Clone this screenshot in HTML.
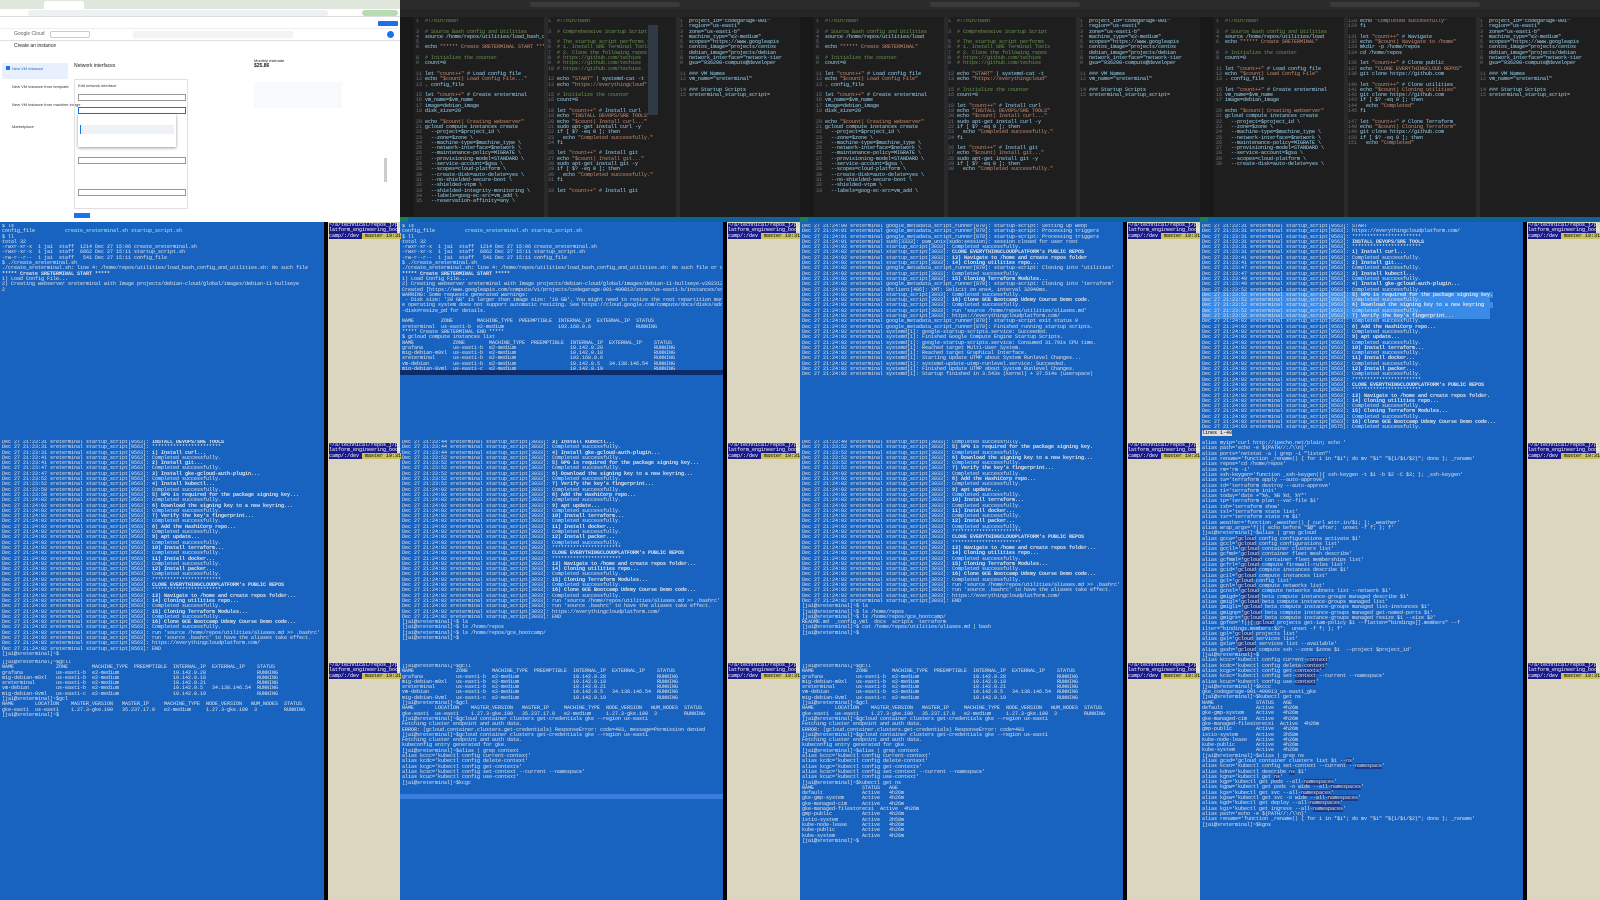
<!DOCTYPE html>
<html><head><meta charset="utf-8"><style>
*{margin:0;padding:0;box-sizing:border-box}
body{width:1600px;height:900px;overflow:hidden;background:#000;font-family:"Liberation Sans",sans-serif;position:relative}
.a{position:absolute}
pre{font-family:"Liberation Mono",monospace;font-size:5px;line-height:5.3px;color:#e6e6e6;white-space:pre;overflow:hidden}
.term{background:#1862c0}
.side{background:#dcd6c0}
.hd{background:#1a1a8a;color:#fff;font-family:"Liberation Mono",monospace;font-size:5px;line-height:5.3px;white-space:pre;width:68px}
.hd b{background:#c8c060;color:#000;font-weight:normal}
.vs{background:#1e1e1e}
.ed pre{color:#9cdcfe}
.ln{color:#6e7681}
.c{color:#6a9955}.s{color:#ce9178}.k{color:#c586c0}
.tab{background:#252526;height:8px}
.sb{background:#0e639c;height:5px}
</style></head><body>

<!-- COLUMN 1 BROWSER -->
<div class="a" style="left:0;top:0;width:400px;height:222px;background:#fff">
 <div class="a" style="left:0;top:0;width:400px;height:9px;background:#dfe6dc"></div>
 <div class="a" style="left:44px;top:1px;width:40px;height:8px;background:#fff;border-radius:3px 3px 0 0"></div>
 <div class="a" style="left:0;top:9px;width:400px;height:8px;background:#fff;border-bottom:1px solid #ddd"></div>
 <div class="a" style="left:28px;top:10px;width:300px;height:6px;background:#eef1f4;border-radius:3px"></div>
 <div class="a" style="left:362px;top:10px;width:36px;height:6px;background:#b7dcb2;border-radius:3px"></div>
 <div class="a" style="left:0;top:18px;width:400px;height:11px;background:#fff;border-bottom:1px solid #eee"></div>
 <div class="a" style="left:378px;top:21px;width:20px;height:5px;background:#1a73e8;border-radius:1px"></div>
 <div class="a" style="left:0;top:29px;width:400px;height:12px;background:#fff;border-bottom:1px solid #e0e0e0"></div>
 <div class="a" style="left:14px;top:31px;font-size:5px;color:#5f6368">Google Cloud</div>
 <div class="a" style="left:50px;top:31px;width:40px;height:7px;border:1px solid #ccc;border-radius:2px"></div>
 <div class="a" style="left:133px;top:31px;width:160px;height:7px;background:#f1f3f4;border-radius:2px"></div>
 <div class="a" style="left:387px;top:31px;width:7px;height:7px;background:#1a73e8;border-radius:50%"></div>
 <div class="a" style="left:14px;top:43px;font-size:5px;color:#202124">Create an instance</div>
 <div class="a" style="left:2px;top:63px;width:66px;height:16px;background:#e8f0fe"></div>
 <div class="a" style="left:6px;top:66px;width:4px;height:4px;background:#1a73e8"></div>
 <div class="a" style="left:12px;top:66px;font-size:4px;color:#1967d2">New VM instance</div>
 <div class="a" style="left:12px;top:84px;font-size:4px;color:#333">New VM instance from template</div>
 <div class="a" style="left:12px;top:102px;font-size:4px;color:#333">New VM instance from machine image</div>
 <div class="a" style="left:12px;top:124px;font-size:4px;color:#333">Marketplace</div>
 <div class="a" style="left:74px;top:63px;font-size:5px;color:#202124">Network interfaces</div>
 <div class="a" style="left:74px;top:79px;width:114px;height:130px;border:1px solid #e0e0e0"></div>
 <div class="a" style="left:78px;top:83px;font-size:4px;color:#333">Edit network interface</div>
 <div class="a" style="left:78px;top:94px;width:108px;height:7px;border:1px solid #999"></div>
 <div class="a" style="left:78px;top:107px;width:108px;height:7px;border:1px solid #1a73e8"></div>
 <div class="a" style="left:78px;top:114px;width:98px;height:33px;background:#fff;box-shadow:0 1px 3px rgba(0,0,0,.4)"></div>
 <div class="a" style="left:80px;top:125px;width:94px;height:9px;background:#eef2f8;border-left:1px solid #1a73e8"></div>
 <div class="a" style="left:78px;top:157px;width:108px;height:7px;border:1px solid #999"></div>
 <div class="a" style="left:78px;top:189px;width:108px;height:7px;border:1px solid #999"></div>
 <div class="a" style="left:74px;top:213px;width:16px;height:5px;background:#1a73e8"></div>
 <div class="a" style="left:254px;top:58px;font-size:4px;color:#202124">Monthly estimate<br><b style="font-size:5px">$25.86</b></div>
 <div class="a" style="left:254px;top:82px;width:88px;height:26px;background:#f8f9fa"></div>
 <div class="a" style="left:384px;top:158px;width:3px;height:24px;background:#ccc"></div>
</div>

<!-- COLUMNS 2-4 VS CODE -->
<div class="a vs" style="left:400px;top:0;width:1200px;height:222px"></div>
<div class="a" style="left:400px;top:0;width:1200px;height:9px;background:#2b2b2b"></div>
<div class="a" style="left:530px;top:2px;width:150px;height:5px;background:#3a3a3a;border-radius:2px"></div>
<div class="a" style="left:930px;top:2px;width:150px;height:5px;background:#3a3a3a;border-radius:2px"></div>
<div class="a" style="left:1330px;top:2px;width:150px;height:5px;background:#3a3a3a;border-radius:2px"></div>
<div class="a" style="left:400px;top:9px;width:14px;height:208px;background:#181818"></div>
<div class="a" style="left:800px;top:9px;width:14px;height:208px;background:#181818"></div>
<div class="a" style="left:1200px;top:9px;width:14px;height:208px;background:#181818"></div>
<div class="a" style="left:400px;top:9px;width:1200px;height:8px;background:#252526"></div>
<div class="a sb" style="left:400px;top:217px;width:1200px"></div>
<div class="a" style="left:400px;top:217px;width:8px;height:5px;background:#16825d"></div>
<div class="a" style="left:800px;top:217px;width:8px;height:5px;background:#16825d"></div>
<div class="a" style="left:1200px;top:217px;width:8px;height:5px;background:#16825d"></div>

<div class="a ed" style="left:416px;top:19px;width:128px;height:196px"><pre><span class="ln">1 </span> <span class="c">#!/bin/bash</span>

<span class="ln">3 </span> <span class="c"># Source Bash config and Utilities</span>
<span class="ln">4 </span> source /home/repos/utilities/load_bash_config
<span class="ln">5 </span>
<span class="ln">6 </span> echo <span class="s">"***** Create SRETERMINAL START *****"</span>

<span class="ln">8 </span> <span class="c"># Initialize the counter</span>
<span class="ln">9 </span> count=0

<span class="ln">11</span> let <span class="s">"count++"</span> # Load config file
<span class="ln">12</span> echo <span class="s">"$count) Load Config File..."</span>
<span class="ln">13</span> . config_file

<span class="ln">15</span> let <span class="s">"count++"</span> # Create sreterminal
<span class="ln">16</span> vm_name=$vm_name
<span class="ln">17</span> image=debian_image
<span class="ln">18</span> disk_size=20

<span class="ln">20</span> echo <span class="s">"$count) Creating webserver"</span>
<span class="ln">21</span> gcloud compute instances create
<span class="ln">22</span>   --project=$project_id \
<span class="ln">23</span>   --zone=$zone \
<span class="ln">24</span>   --machine-type=$machine_type \
<span class="ln">25</span>   --network-interface=$network \
<span class="ln">26</span>   --maintenance-policy=MIGRATE \
<span class="ln">27</span>   --provisioning-model=STANDARD \
<span class="ln">28</span>   --service-account=$gsa \
<span class="ln">29</span>   --scopes=cloud-platform \
<span class="ln">30</span>   --create-disk=auto-delete=yes \
<span class="ln">31</span>   --no-shielded-secure-boot \
<span class="ln">32</span>   --shielded-vtpm \
<span class="ln">33</span>   --shielded-integrity-monitoring \
<span class="ln">34</span>   --labels=goog-ec-src=vm_add \
<span class="ln">35</span>   --reservation-affinity=any \</pre></div>
<div class="a ed" style="left:548px;top:19px;width:128px;height:196px"><pre><span class="ln">1 </span> <span class="c">#!/bin/bash</span>

<span class="ln">3 </span> <span class="c"># Comprehensive Startup Script</span>

<span class="ln">5 </span> <span class="c"># The startup script performs the</span>
<span class="ln">6 </span> <span class="c"># 1. Install SRE Terminal Tools</span>
<span class="ln">7 </span> <span class="c"># 2. Clone the following repos</span>
<span class="ln">8 </span> <span class="c"># https://github.com/techies</span>
<span class="ln">9 </span> <span class="c"># https://github.com/techies</span>
<span class="ln">10</span> <span class="c"># https://github.com/techies</span>

<span class="ln">12</span> echo <span class="s">"START"</span> | systemd-cat -t
<span class="ln">13</span> echo <span class="s">"https://everythingcloud"</span>

<span class="ln">15</span> <span class="c"># Initialize the counter</span>
<span class="ln">16</span> count=0

<span class="ln">18</span> let <span class="s">"count++"</span> # Install curl
<span class="ln">19</span> echo <span class="s">"INSTALL DEVOPS/SRE TOOLS"</span>
<span class="ln">20</span> echo <span class="s">"$count) Install curl..."</span>
<span class="ln">21</span> sudo apt-get install curl -y
<span class="ln">22</span> if [ $? -eq 0 ]; then
<span class="ln">23</span>   echo <span class="s">"Completed successfully."</span>
<span class="ln">24</span> fi

<span class="ln">26</span> let <span class="s">"count++"</span> # Install git
<span class="ln">27</span> echo <span class="s">"$count) Install git..."</span>
<span class="ln">28</span> sudo apt-get install git -y
<span class="ln">29</span> if [ $? -eq 0 ]; then
<span class="ln">30</span>   echo <span class="s">"Completed successfully."</span>
<span class="ln">31</span> fi

<span class="ln">33</span> let <span class="s">"count++"</span> # Install git</pre></div>
<div class="a ed" style="left:680px;top:19px;width:115px;height:196px"><pre><span class="ln">1 </span> project_id="codegarage-001"
<span class="ln">2 </span> region="us-east1"
<span class="ln">3 </span> zone="us-east1-b"
<span class="ln">4 </span> machine_type="e2-medium"
<span class="ln">5 </span> scopes="https://www.googleapis
<span class="ln">6 </span> centos_image="projects/centos
<span class="ln">7 </span> debian_image="projects/debian
<span class="ln">8 </span> network_interface="network-tier
<span class="ln">9 </span> gsa="936200-compute@developer

<span class="ln">11</span> ### VM Names
<span class="ln">12</span> vm_name="sreterminal"

<span class="ln">14</span> ### Startup Scripts
<span class="ln">15</span> sreterminal_startup_script=</pre></div>
<div class="a" style="left:544px;top:17px;width:4px;height:200px;background:#2a2a2a"></div>
<div class="a" style="left:676px;top:17px;width:4px;height:200px;background:#2a2a2a"></div>
<div class="a" style="left:648px;top:25px;width:10px;height:90px;background:#2f3a44"></div>

<div class="a ed" style="left:816px;top:19px;width:128px;height:196px"><pre><span class="ln">1 </span> <span class="c">#!/bin/bash</span>

<span class="ln">3 </span> <span class="c"># Source Bash config and Utilities</span>
<span class="ln">4 </span> source /home/repos/utilities/load
<span class="ln">5 </span>
<span class="ln">6 </span> echo <span class="s">"***** Create SRETERMINAL"</span>

<span class="ln">8 </span> <span class="c"># Initialize the counter</span>
<span class="ln">9 </span> count=0

<span class="ln">11</span> let <span class="s">"count++"</span> # Load config file
<span class="ln">12</span> echo <span class="s">"$count) Load Config File"</span>
<span class="ln">13</span> . config_file

<span class="ln">15</span> let <span class="s">"count++"</span> # Create sreterminal
<span class="ln">16</span> vm_name=$vm_name
<span class="ln">17</span> image=debian_image
<span class="ln">18</span> disk_size=20

<span class="ln">20</span> echo <span class="s">"$count) Creating webserver"</span>
<span class="ln">21</span> gcloud compute instances create
<span class="ln">22</span>   --project=$project_id \
<span class="ln">23</span>   --zone=$zone \
<span class="ln">24</span>   --machine-type=$machine_type \
<span class="ln">25</span>   --network-interface=$network \
<span class="ln">26</span>   --maintenance-policy=MIGRATE \
<span class="ln">27</span>   --provisioning-model=STANDARD \
<span class="ln">28</span>   --service-account=$gsa \
<span class="ln">29</span>   --scopes=cloud-platform \
<span class="ln">30</span>   --create-disk=auto-delete=yes \
<span class="ln">31</span>   --no-shielded-secure-boot \
<span class="ln">32</span>   --shielded-vtpm \
<span class="ln">33</span>   --labels=goog-ec-src=vm_add \</pre></div>
<div class="a ed" style="left:948px;top:19px;width:128px;height:196px"><pre><span class="ln">1 </span> <span class="c">#!/bin/bash</span>

<span class="ln">3 </span> <span class="c"># Comprehensive Startup Script</span>

<span class="ln">5 </span> <span class="c"># The startup script performs</span>
<span class="ln">6 </span> <span class="c"># 1. Install SRE Terminal Tools</span>
<span class="ln">7 </span> <span class="c"># 2. Clone the following repos</span>
<span class="ln">8 </span> <span class="c"># https://github.com/techies</span>
<span class="ln">9 </span> <span class="c"># https://github.com/techies</span>

<span class="ln">12</span> echo <span class="s">"START"</span> | systemd-cat -t
<span class="ln">13</span> echo <span class="s">"https://everythingcloud"</span>

<span class="ln">15</span> <span class="c"># Initialize the counter</span>
<span class="ln">16</span> count=0

<span class="ln">18</span> let <span class="s">"count++"</span> # Install curl
<span class="ln">19</span> echo <span class="s">"INSTALL DEVOPS/SRE TOOLS"</span>
<span class="ln">20</span> echo <span class="s">"$count) Install curl..."</span>
<span class="ln">21</span> sudo apt-get install curl -y
<span class="ln">22</span> if [ $? -eq 0 ]; then
<span class="ln">23</span>   echo <span class="s">"Completed successfully."</span>
<span class="ln">24</span> fi

<span class="ln">26</span> let <span class="s">"count++"</span> # Install git
<span class="ln">27</span> echo <span class="s">"$count) Install git..."</span>
<span class="ln">28</span> sudo apt-get install git -y
<span class="ln">29</span> if [ $? -eq 0 ]; then
<span class="ln">30</span>   echo <span class="s">"Completed successfully."</span></pre></div>
<div class="a ed" style="left:1080px;top:19px;width:115px;height:196px"><pre><span class="ln">1 </span> project_id="codegarage-001"
<span class="ln">2 </span> region="us-east1"
<span class="ln">3 </span> zone="us-east1-b"
<span class="ln">4 </span> machine_type="e2-medium"
<span class="ln">5 </span> scopes="https://www.googleapis
<span class="ln">6 </span> centos_image="projects/centos
<span class="ln">7 </span> debian_image="projects/debian
<span class="ln">8 </span> network_interface="network-tier
<span class="ln">9 </span> gsa="936200-compute@developer

<span class="ln">11</span> ### VM Names
<span class="ln">12</span> vm_name="sreterminal"

<span class="ln">14</span> ### Startup Scripts
<span class="ln">15</span> sreterminal_startup_script=</pre></div>
<div class="a" style="left:944px;top:17px;width:4px;height:200px;background:#2a2a2a"></div>
<div class="a" style="left:1076px;top:17px;width:4px;height:200px;background:#2a2a2a"></div>

<div class="a ed" style="left:1216px;top:19px;width:128px;height:196px"><pre><span class="ln">1 </span> <span class="c">#!/bin/bash</span>

<span class="ln">3 </span> <span class="c"># Source Bash config and Utilities</span>
<span class="ln">4 </span> source /home/repos/utilities/load
<span class="ln">6 </span> echo <span class="s">"***** Create SRETERMINAL"</span>

<span class="ln">8 </span> <span class="c"># Initialize the counter</span>
<span class="ln">9 </span> count=0

<span class="ln">11</span> let <span class="s">"count++"</span> # Load config file
<span class="ln">12</span> echo <span class="s">"$count) Load Config File"</span>
<span class="ln">13</span> . config_file

<span class="ln">15</span> let <span class="s">"count++"</span> # Create sreterminal
<span class="ln">16</span> vm_name=$vm_name
<span class="ln">17</span> image=debian_image

<span class="ln">20</span> echo <span class="s">"$count) Creating webserver"</span>
<span class="ln">21</span> gcloud compute instances create
<span class="ln">22</span>   --project=$project_id \
<span class="ln">23</span>   --zone=$zone \
<span class="ln">24</span>   --machine-type=$machine_type \
<span class="ln">25</span>   --network-interface=$network \
<span class="ln">26</span>   --maintenance-policy=MIGRATE \
<span class="ln">27</span>   --provisioning-model=STANDARD \
<span class="ln">28</span>   --service-account=$gsa \
<span class="ln">29</span>   --scopes=cloud-platform \
<span class="ln">30</span>   --create-disk=auto-delete=yes \</pre></div>
<div class="a ed" style="left:1348px;top:19px;width:128px;height:196px"><pre><span class="ln">128</span> echo <span class="s">"Completed successfully"</span>
<span class="ln">129</span> fi

<span class="ln">131</span> let <span class="s">"count++"</span> # Navigate
<span class="ln">132</span> echo <span class="s">"$count) Navigate to /home"</span>
<span class="ln">133</span> mkdir -p /home/repos
<span class="ln">134</span> cd /home/repos

<span class="ln">136</span> let <span class="s">"count++"</span> # Clone public
<span class="ln">137</span> echo <span class="s">"CLONE EVERYTHINGCLOUD REPOS"</span>
<span class="ln">138</span> git clone https://github.com

<span class="ln">140</span> let <span class="s">"count++"</span> # Clone utilities
<span class="ln">141</span> echo <span class="s">"$count) Cloning utilities"</span>
<span class="ln">142</span> git clone https://github.com
<span class="ln">143</span> if [ $? -eq 0 ]; then
<span class="ln">144</span>   echo <span class="s">"Completed"</span>
<span class="ln">145</span> fi

<span class="ln">147</span> let <span class="s">"count++"</span> # Clone Terraform
<span class="ln">148</span> echo <span class="s">"$count) Cloning Terraform"</span>
<span class="ln">149</span> git clone https://github.com
<span class="ln">150</span> if [ $? -eq 0 ]; then
<span class="ln">151</span>   echo <span class="s">"Completed"</span></pre></div>
<div class="a ed" style="left:1480px;top:19px;width:115px;height:196px"><pre><span class="ln">1 </span> project_id="codegarage-001"
<span class="ln">2 </span> region="us-east1"
<span class="ln">3 </span> zone="us-east1-b"
<span class="ln">4 </span> machine_type="e2-medium"
<span class="ln">5 </span> scopes="https://www.googleapis
<span class="ln">6 </span> centos_image="projects/centos
<span class="ln">7 </span> debian_image="projects/debian
<span class="ln">8 </span> network_interface="network-tier
<span class="ln">9 </span> gsa="936200-compute@developer

<span class="ln">11</span> ### VM Names
<span class="ln">12</span> vm_name="sreterminal"

<span class="ln">14</span> ### Startup Scripts
<span class="ln">15</span> sreterminal_startup_script=</pre></div>
<div class="a" style="left:1344px;top:17px;width:4px;height:200px;background:#2a2a2a"></div>
<div class="a" style="left:1476px;top:17px;width:4px;height:200px;background:#2a2a2a"></div>

<!-- TERMINALS -->
<div class="a term" style="left:0;top:222px;width:324px;height:678px"></div>
<div class="a side" style="left:328px;top:222px;width:72px;height:678px"></div>
<div class="a term" style="left:400px;top:222px;width:323px;height:678px"></div>
<div class="a side" style="left:727px;top:222px;width:73px;height:678px"></div>
<div class="a term" style="left:800px;top:222px;width:323px;height:678px"></div>
<div class="a side" style="left:1127px;top:222px;width:73px;height:678px"></div>
<div class="a term" style="left:1200px;top:222px;width:323px;height:678px"></div>
<div class="a side" style="left:1527px;top:222px;width:73px;height:678px"></div>

<div class="a hd" style="left:329px;top:223px">~/a/technical/repos_j/p
latform_engineering_boot
camp/:/dev <b> master 19:31</b></div>
<div class="a hd" style="left:329px;top:443px">~/a/technical/repos_j/p
latform_engineering_boot
camp/:/dev <b> master 19:31</b></div>
<div class="a hd" style="left:329px;top:663px">~/a/technical/repos_j/p
latform_engineering_boot
camp/:/dev <b> master 19:31</b></div>
<div class="a hd" style="left:728px;top:223px">~/a/technical/repos_j/p
latform_engineering_boot
camp/:/dev <b> master 19:31</b></div>
<div class="a hd" style="left:728px;top:443px">~/a/technical/repos_j/p
latform_engineering_boot
camp/:/dev <b> master 19:31</b></div>
<div class="a hd" style="left:728px;top:663px">~/a/technical/repos_j/p
latform_engineering_boot
camp/:/dev <b> master 19:31</b></div>
<div class="a hd" style="left:1128px;top:223px">~/a/technical/repos_j/p
latform_engineering_boot
camp/:/dev <b> master 19:31</b></div>
<div class="a hd" style="left:1128px;top:443px">~/a/technical/repos_j/p
latform_engineering_boot
camp/:/dev <b> master 19:31</b></div>
<div class="a hd" style="left:1128px;top:663px">~/a/technical/repos_j/p
latform_engineering_boot
camp/:/dev <b> master 19:31</b></div>
<div class="a hd" style="left:1528px;top:223px">~/a/technical/repos_j/p
latform_engineering_boot
camp/:/dev <b> master 19:31</b></div>
<div class="a hd" style="left:1528px;top:443px">~/a/technical/repos_j/p
latform_engineering_boot
camp/:/dev <b> master 19:31</b></div>
<div class="a hd" style="left:1528px;top:663px">~/a/technical/repos_j/p
latform_engineering_boot
camp/:/dev <b> master 19:31</b></div>

<!-- col1 terminal text -->
<pre class="a" style="left:2px;top:224px;width:320px">$ ls
config_file          <span style="color:#8fe">create_sreterminal.sh startup_script.sh</span>
$ ll
total 32
-rwxr-xr-x  1 jai  staff  1214 Dec 27 15:06 create_sreterminal.sh
-rwxr-xr-x  1 jai  staff  6862 Dec 27 15:11 startup_script.sh
-rw-r--r--  1 jai  staff   541 Dec 27 15:11 config_file
$ ./create_sreterminal.sh
./create_sreterminal.sh: line 4: /home/repos/utilities/load_bash_config_and_utilities.sh: No such file
<b>***** Create SRETERMINAL START *****</b>
1) Load Config File...
2) Creating webserver sreterminal with Image projects/debian-cloud/global/images/debian-11-bullseye
2</pre>
<pre class="a" style="left:2px;top:440px;width:320px">Dec 27 21:23:31 sreterminal startup_script[9563]: <b>INSTALL DEVOPS/SRE TOOLS</b>
Dec 27 21:23:31 sreterminal startup_script[9563]: ***********************
Dec 27 21:23:31 sreterminal startup_script[9563]: <b>1) Install curl...</b>
Dec 27 21:23:41 sreterminal startup_script[9563]: Completed successfully.
Dec 27 21:23:41 sreterminal startup_script[9563]: <b>2) Install git...</b>
Dec 27 21:23:47 sreterminal startup_script[9563]: Completed successfully.
Dec 27 21:23:47 sreterminal startup_script[9563]: <b>3) Install gke-gcloud-auth-plugin...</b>
Dec 27 21:23:52 sreterminal startup_script[9563]: Completed successfully.
Dec 27 21:23:52 sreterminal startup_script[9563]: <b>4) Install kubectl...</b>
Dec 27 21:23:58 sreterminal startup_script[9563]: Completed successfully.
Dec 27 21:23:58 sreterminal startup_script[9563]: <b>5) GPG is required for the package signing key...</b>
Dec 27 21:24:02 sreterminal startup_script[9563]: Completed successfully.
Dec 27 21:24:02 sreterminal startup_script[9563]: <b>6) Download the signing key to a new keyring...</b>
Dec 27 21:24:02 sreterminal startup_script[9563]: Completed successfully.
Dec 27 21:24:02 sreterminal startup_script[9563]: <b>7) Verify the key's fingerprint...</b>
Dec 27 21:24:02 sreterminal startup_script[9563]: Completed successfully.
Dec 27 21:24:02 sreterminal startup_script[9563]: <b>8) Add the HashiCorp repo...</b>
Dec 27 21:24:02 sreterminal startup_script[9563]: Completed successfully.
Dec 27 21:24:02 sreterminal startup_script[9563]: <b>9) apt update...</b>
Dec 27 21:24:02 sreterminal startup_script[9563]: Completed successfully.
Dec 27 21:24:02 sreterminal startup_script[9563]: <b>10) Install terraform...</b>
Dec 27 21:24:02 sreterminal startup_script[9563]: Completed successfully.
Dec 27 21:24:02 sreterminal startup_script[9563]: <b>11) Install docker...</b>
Dec 27 21:24:02 sreterminal startup_script[9563]: Completed successfully.
Dec 27 21:24:02 sreterminal startup_script[9563]: <b>12) Install packer...</b>
Dec 27 21:24:02 sreterminal startup_script[9563]: Completed successfully.
Dec 27 21:24:02 sreterminal startup_script[9563]: ***********************
Dec 27 21:24:02 sreterminal startup_script[9563]: <b>CLONE EVERYTHINGCLOUDPLATFORM's PUBLIC REPOS</b>
Dec 27 21:24:02 sreterminal startup_script[9563]: ***********************
Dec 27 21:24:02 sreterminal startup_script[9563]: <b>13) Navigate to /home and create repos folder...</b>
Dec 27 21:24:02 sreterminal startup_script[9563]: <b>14) Cloning utilities repo...</b>
Dec 27 21:24:02 sreterminal startup_script[9563]: Completed successfully.
Dec 27 21:24:02 sreterminal startup_script[9563]: <b>15) Cloning Terraform Modules...</b>
Dec 27 21:24:02 sreterminal startup_script[9563]: Completed successfully.
Dec 27 21:24:02 sreterminal startup_script[9563]: <b>16) Clone GCE Bootcamp Udemy Course Demo code...</b>
Dec 27 21:24:02 sreterminal startup_script[9563]: Completed successfully.
Dec 27 21:24:02 sreterminal startup_script[9563]: run 'source /home/repos/utilities/aliases.md >> .bashrc' to add
Dec 27 21:24:02 sreterminal startup_script[9563]: run 'source .bashrc' to have the aliases take effect.
Dec 27 21:24:02 sreterminal startup_script[9563]: https://everythingcloudplatform.com/
Dec 27 21:24:02 sreterminal startup_script[9563]: END
[jai@sreterminal]~$ </pre>
<pre class="a" style="left:2px;top:660px;width:320px">[jai@sreterminal]~$gcll
NAME              ZONE        MACHINE_TYPE  PREEMPTIBLE  INTERNAL_IP  EXTERNAL_IP    STATUS
grafana           us-east1-b  e2-medium                  10.142.0.28                 RUNNING
mig-debian-m9xl   us-east1-b  e2-medium                  10.142.0.18                 RUNNING
sreterminal       us-east1-b  e2-medium                  10.142.0.21                 RUNNING
vm-debian         us-east1-b  e2-medium                  10.142.0.5   34.138.146.54  RUNNING
mig-debian-8vml   us-east1-c  e2-medium                  10.142.0.19                 RUNNING
[jai@sreterminal]~$gcl
NAME       LOCATION    MASTER_VERSION   MASTER_IP     MACHINE_TYPE  NODE_VERSION   NUM_NODES  STATUS
gke-east1  us-east1    1.27.3-gke.100   35.237.17.0   e2-medium     1.27.3-gke.100  3         RUNNING
[jai@sreterminal]~$ </pre>

<!-- col2 terminal text -->
<pre class="a" style="left:402px;top:224px;width:320px">$ ls
config_file          <span style="color:#8fe">create_sreterminal.sh startup_script.sh</span>
$ ll
total 32
-rwxr-xr-x  1 jai  staff  1214 Dec 27 15:06 create_sreterminal.sh
-rwxr-xr-x  1 jai  staff  6862 Dec 27 15:11 startup_script.sh
-rw-r--r--  1 jai  staff   541 Dec 27 15:11 config_file
$ ./create_sreterminal.sh
./create_sreterminal.sh: line 4: /home/repos/utilities/load_bash_config_and_utilities.sh: No such file or directory
<b>***** Create SRETERMINAL START *****</b>
1) Load Config File...
2) Creating webserver sreterminal with Image projects/debian-cloud/global/images/debian-11-bullseye-v20231212...
Created [https://www.googleapis.com/compute/v1/projects/codegarage-001-400013/zones/us-east1-b/instances/sreterminal].
WARNING: Some requests generated warnings:
 - Disk size: '20 GB' is larger than image size: '10 GB'. You might need to resize the root repartition manually if th
e operating system does not support automatic resizing. See https://cloud.google.com/compute/docs/disks/add-persistent
-disk#resize_pd for details.

NAME         ZONE        MACHINE_TYPE  PREEMPTIBLE  INTERNAL_IP  EXTERNAL_IP  STATUS
sreterminal  us-east1-b  e2-medium                  192.168.0.6               RUNNING
***** Create SRETERMINAL END *****
$ gcloud compute instances list
NAME             ZONE        MACHINE_TYPE  PREEMPTIBLE  INTERNAL_IP  EXTERNAL_IP    STATUS
grafana          us-east1-b  e2-medium                  10.142.0.28                 RUNNING
mig-debian-m9xl  us-east1-b  e2-medium                  10.142.0.18                 RUNNING
sreterminal      us-east1-b  e2-medium                  192.168.0.6                 RUNNING
vm-debian        us-east1-b  e2-medium                  10.142.0.5   34.138.146.54  RUNNING
mig-debian-8vml  us-east1-c  e2-medium                  10.142.0.19                 RUNNING</pre>
<div class="a" style="left:400px;top:370px;width:323px;height:5px;background:#0d2c6e"></div>
<pre class="a" style="left:402px;top:440px;width:320px">Dec 27 21:23:44 sreterminal startup_script[3033]: <b>3) Install kubectl...</b>
Dec 27 21:23:44 sreterminal startup_script[3033]: Completed successfully.
Dec 27 21:23:44 sreterminal startup_script[3033]: <b>4) Install gke-gcloud-auth-plugin...</b>
Dec 27 21:23:52 sreterminal startup_script[3033]: Completed successfully.
Dec 27 21:23:52 sreterminal startup_script[3033]: <b>5) GPG is required for the package signing key...</b>
Dec 27 21:23:52 sreterminal startup_script[3033]: Completed successfully.
Dec 27 21:23:52 sreterminal startup_script[3033]: <b>6) Download the signing key to a new keyring...</b>
Dec 27 21:23:52 sreterminal startup_script[3033]: Completed successfully.
Dec 27 21:23:52 sreterminal startup_script[3033]: <b>7) Verify the key's fingerprint...</b>
Dec 27 21:24:02 sreterminal startup_script[3033]: Completed successfully.
Dec 27 21:24:02 sreterminal startup_script[3033]: <b>8) Add the HashiCorp repo...</b>
Dec 27 21:24:02 sreterminal startup_script[3033]: Completed successfully.
Dec 27 21:24:02 sreterminal startup_script[3033]: <b>9) apt update...</b>
Dec 27 21:24:02 sreterminal startup_script[3033]: Completed successfully.
Dec 27 21:24:02 sreterminal startup_script[3033]: <b>10) Install terraform...</b>
Dec 27 21:24:02 sreterminal startup_script[3033]: Completed successfully.
Dec 27 21:24:02 sreterminal startup_script[3033]: <b>11) Install docker...</b>
Dec 27 21:24:02 sreterminal startup_script[3033]: Completed successfully.
Dec 27 21:24:02 sreterminal startup_script[3033]: <b>12) Install packer...</b>
Dec 27 21:24:02 sreterminal startup_script[3033]: Completed successfully.
Dec 27 21:24:02 sreterminal startup_script[3033]: ***********************
Dec 27 21:24:02 sreterminal startup_script[3033]: <b>CLONE EVERYTHINGCLOUDPLATFORM's PUBLIC REPOS</b>
Dec 27 21:24:02 sreterminal startup_script[3033]: ***********************
Dec 27 21:24:02 sreterminal startup_script[3033]: <b>13) Navigate to /home and create repos folder...</b>
Dec 27 21:24:02 sreterminal startup_script[3033]: <b>14) Cloning utilities repo...</b>
Dec 27 21:24:02 sreterminal startup_script[3033]: Completed successfully.
Dec 27 21:24:02 sreterminal startup_script[3033]: <b>15) Cloning Terraform Modules...</b>
Dec 27 21:24:02 sreterminal startup_script[3033]: Completed successfully.
Dec 27 21:24:02 sreterminal startup_script[3033]: <b>16) Clone GCE Bootcamp Udemy Course Demo code...</b>
Dec 27 21:24:02 sreterminal startup_script[3033]: Completed successfully.
Dec 27 21:24:02 sreterminal startup_script[3033]: run 'source /home/repos/utilities/aliases.md >> .bashrc' to add
Dec 27 21:24:02 sreterminal startup_script[3033]: run 'source .bashrc' to have the aliases take effect.
Dec 27 21:24:02 sreterminal startup_script[3033]: https://everythingcloudplatform.com/
Dec 27 21:24:02 sreterminal startup_script[3033]: END
[jai@sreterminal]~$ ls
[jai@sreterminal]~$ ls /home/repos
[jai@sreterminal]~$ ls /home/repos/gce_bootcamp/
[jai@sreterminal]~$ </pre>
<pre class="a" style="left:402px;top:664px;width:320px">[jai@sreterminal]~$gcll
NAME              ZONE        MACHINE_TYPE  PREEMPTIBLE  INTERNAL_IP  EXTERNAL_IP    STATUS
grafana           us-east1-b  e2-medium                  10.142.0.28                 RUNNING
mig-debian-m9xl   us-east1-b  e2-medium                  10.142.0.18                 RUNNING
sreterminal       us-east1-b  e2-medium                  10.142.0.21                 RUNNING
vm-debian         us-east1-b  e2-medium                  10.142.0.5   34.138.146.54  RUNNING
mig-debian-8vml   us-east1-c  e2-medium                  10.142.0.19                 RUNNING
[jai@sreterminal]~$gcl
NAME       LOCATION    MASTER_VERSION   MASTER_IP     MACHINE_TYPE  NODE_VERSION   NUM_NODES  STATUS
gke-east1  us-east1    1.27.3-gke.100   35.237.17.0   e2-medium     1.27.3-gke.100  3         RUNNING
[jai@sreterminal]~$gcloud container clusters get-credentials gke --region us-east1
Fetching cluster endpoint and auth data.
ERROR: (gcloud.container.clusters.get-credentials) ResponseError: code=403, message=Permission denied
[jai@sreterminal]~$gcloud container clusters get-credentials gke --region us-east1
Fetching cluster endpoint and auth data.
kubeconfig entry generated for gke.
[jai@sreterminal]~$alias | grep context
alias kccc='kubectl config current-context'
alias kcdc='kubectl config delete-context'
alias kcgc='kubectl config get-contexts'
alias kcsc='kubectl config set-context --current --namespace'
alias kcuc='kubectl config use-context'
[jai@sreterminal]~$kcgc</pre>
<div class="a" style="left:400px;top:794px;width:323px;height:5px;background:#3a7fe0"></div>

<!-- col3 terminal text -->
<pre class="a" style="left:802px;top:224px;width:320px">Dec 27 21:24:00 sreterminal google_metadata_script_runner[870]: startup-script: Setting up webp
Dec 27 21:24:01 sreterminal google_metadata_script_runner[870]: startup-script: Processing triggers
Dec 27 21:24:01 sreterminal google_metadata_script_runner[870]: startup-script: Processing triggers
Dec 27 21:24:01 sreterminal sudo[3333]: pam_unix(sudo:session): session closed for user root
Dec 27 21:24:02 sreterminal startup_script[3033]: Completed successfully.
Dec 27 21:24:02 sreterminal startup_script[3033]: <b>CLONE EVERYTHINGCLOUDPLATFORM's PUBLIC REPOS</b>
Dec 27 21:24:02 sreterminal startup_script[3033]: <b>13) Navigate to /home and create repos folder</b>
Dec 27 21:24:02 sreterminal startup_script[3033]: <b>14) Cloning utilities repo...</b>
Dec 27 21:24:02 sreterminal google_metadata_script_runner[870]: startup-script: Cloning into 'utilities'
Dec 27 21:24:02 sreterminal startup_script[3033]: Completed successfully.
Dec 27 21:24:02 sreterminal startup_script[3033]: <b>15) Cloning Terraform Modules...</b>
Dec 27 21:24:02 sreterminal google_metadata_script_runner[870]: startup-script: Cloning into 'terraform'
Dec 27 21:24:02 sreterminal dhclient[486]: XMT: Solicit on ens4, interval 32940ms.
Dec 27 21:24:02 sreterminal startup_script[3033]: Completed successfully.
Dec 27 21:24:02 sreterminal startup_script[3033]: <b>16) Clone GCE Bootcamp Udemy Course Demo code.</b>
Dec 27 21:24:02 sreterminal startup_script[3033]: Completed successfully.
Dec 27 21:24:02 sreterminal startup_script[3033]: run 'source /home/repos/utilities/aliases.md'
Dec 27 21:24:02 sreterminal startup_script[3033]: https://everythingcloudplatform.com/
Dec 27 21:24:02 sreterminal google_metadata_script_runner[870]: startup-script exit status 0
Dec 27 21:24:02 sreterminal google_metadata_script_runner[870]: Finished running startup scripts.
Dec 27 21:24:02 sreterminal systemd[1]: google-startup-scripts.service: Succeeded.
Dec 27 21:24:02 sreterminal systemd[1]: Finished Google Compute Engine Startup Scripts.
Dec 27 21:24:02 sreterminal systemd[1]: google-startup-scripts.service: Consumed 31.791s CPU time.
Dec 27 21:24:02 sreterminal systemd[1]: Reached target Multi-User System.
Dec 27 21:24:02 sreterminal systemd[1]: Reached target Graphical Interface.
Dec 27 21:24:02 sreterminal systemd[1]: Starting Update UTMP about System Runlevel Changes...
Dec 27 21:24:02 sreterminal systemd[1]: systemd-update-utmp-runlevel.service: Succeeded.
Dec 27 21:24:02 sreterminal systemd[1]: Finished Update UTMP about System Runlevel Changes.
Dec 27 21:24:02 sreterminal systemd[1]: Startup finished in 3.543s (kernel) + 37.514s (userspace)</pre>
<pre class="a" style="left:802px;top:440px;width:320px">Dec 27 21:23:49 sreterminal startup_script[3033]: Completed successfully.
Dec 27 21:23:52 sreterminal startup_script[3033]: <b>5) GPG is required for the package signing key.</b>
Dec 27 21:23:52 sreterminal startup_script[3033]: Completed successfully.
Dec 27 21:23:52 sreterminal startup_script[3033]: <b>6) Download the signing key to a new keyring...</b>
Dec 27 21:23:52 sreterminal startup_script[3033]: Completed successfully.
Dec 27 21:23:52 sreterminal startup_script[3033]: <b>7) Verify the key's fingerprint...</b>
Dec 27 21:24:02 sreterminal startup_script[3033]: Completed successfully.
Dec 27 21:24:02 sreterminal startup_script[3033]: <b>8) Add the HashiCorp repo...</b>
Dec 27 21:24:02 sreterminal startup_script[3033]: Completed successfully.
Dec 27 21:24:02 sreterminal startup_script[3033]: <b>9) apt update...</b>
Dec 27 21:24:02 sreterminal startup_script[3033]: Completed successfully.
Dec 27 21:24:02 sreterminal startup_script[3033]: <b>10) Install terraform...</b>
Dec 27 21:24:02 sreterminal startup_script[3033]: Completed successfully.
Dec 27 21:24:02 sreterminal startup_script[3033]: <b>11) Install docker...</b>
Dec 27 21:24:02 sreterminal startup_script[3033]: Completed successfully.
Dec 27 21:24:02 sreterminal startup_script[3033]: <b>12) Install packer...</b>
Dec 27 21:24:02 sreterminal startup_script[3033]: Completed successfully.
Dec 27 21:24:02 sreterminal startup_script[3033]: ***********************
Dec 27 21:24:02 sreterminal startup_script[3033]: <b>CLONE EVERYTHINGCLOUDPLATFORM's PUBLIC REPOS</b>
Dec 27 21:24:02 sreterminal startup_script[3033]: ***********************
Dec 27 21:24:02 sreterminal startup_script[3033]: <b>13) Navigate to /home and create repos folder...</b>
Dec 27 21:24:02 sreterminal startup_script[3033]: <b>14) Cloning utilities repo...</b>
Dec 27 21:24:02 sreterminal startup_script[3033]: Completed successfully.
Dec 27 21:24:02 sreterminal startup_script[3033]: <b>15) Cloning Terraform Modules...</b>
Dec 27 21:24:02 sreterminal startup_script[3033]: Completed successfully.
Dec 27 21:24:02 sreterminal startup_script[3033]: <b>16) Clone GCE Bootcamp Udemy Course Demo code...</b>
Dec 27 21:24:02 sreterminal startup_script[3033]: Completed successfully.
Dec 27 21:24:02 sreterminal startup_script[3033]: run 'source /home/repos/utilities/aliases.md >> .bashrc'
Dec 27 21:24:02 sreterminal startup_script[3033]: run 'source .bashrc' to have the aliases take effect.
Dec 27 21:24:02 sreterminal startup_script[3033]: https://everythingcloudplatform.com/
Dec 27 21:24:02 sreterminal startup_script[3033]: END
[jai@sreterminal]~$ ls
[jai@sreterminal]~$ ls /home/repos
[jai@sreterminal]~$ ls /home/repos/gce_bootcamp/
README.md  _config.yml  docs  scripts  terraform
[jai@sreterminal]~$ cat /home/repos/utilities/aliases.md | bash
[jai@sreterminal]~$ </pre>
<pre class="a" style="left:802px;top:664px;width:320px">[jai@sreterminal]~$gcll
NAME              ZONE        MACHINE_TYPE  PREEMPTIBLE  INTERNAL_IP  EXTERNAL_IP    STATUS
grafana           us-east1-b  e2-medium                  10.142.0.28                 RUNNING
mig-debian-m9xl   us-east1-b  e2-medium                  10.142.0.18                 RUNNING
sreterminal       us-east1-b  e2-medium                  10.142.0.21                 RUNNING
vm-debian         us-east1-b  e2-medium                  10.142.0.5   34.138.146.54  RUNNING
mig-debian-8vml   us-east1-c  e2-medium                  10.142.0.19                 RUNNING
[jai@sreterminal]~$gcl
NAME       LOCATION    MASTER_VERSION   MASTER_IP     MACHINE_TYPE  NODE_VERSION   NUM_NODES  STATUS
gke-east1  us-east1    1.27.3-gke.100   35.237.17.0   e2-medium     1.27.3-gke.100  3         RUNNING
[jai@sreterminal]~$gcloud container clusters get-credentials gke --region us-east1
Fetching cluster endpoint and auth data.
ERROR: (gcloud.container.clusters.get-credentials) ResponseError: code=403
[jai@sreterminal]~$gcloud container clusters get-credentials gke --region us-east1
Fetching cluster endpoint and auth data.
kubeconfig entry generated for gke.
[jai@sreterminal]~$alias | grep context
alias kccc='kubectl config current-context'
alias kcdc='kubectl config delete-context'
alias kcgc='kubectl config get-contexts'
alias kcsc='kubectl config set-context --current --namespace'
alias kcuc='kubectl config use-context'
[jai@sreterminal]~$kubectl get ns
NAME                STATUS   AGE
default             Active   4h26m
gke-gmp-system      Active   4h26m
gke-managed-cim     Active   4h26m
gke-managed-filestorecsi  Active  4h26m
gmp-public          Active   4h26m
istio-system        Active   3h58m
kube-node-lease     Active   4h26m
kube-public         Active   4h26m
kube-system         Active   4h26m
[jai@sreterminal]~$</pre>

<!-- col4 terminal text -->
<pre class="a" style="left:1202px;top:224px;width:320px">Dec 27 21:23:31 sreterminal startup_script[9563]: START
Dec 27 21:23:31 sreterminal startup_script[9563]: https://everythingcloudplatform.com/
Dec 27 21:23:31 sreterminal startup_script[9563]: ***********************
Dec 27 21:23:31 sreterminal startup_script[9563]: <b>INSTALL DEVOPS/SRE TOOLS</b>
Dec 27 21:23:31 sreterminal startup_script[9563]: ***********************
Dec 27 21:23:31 sreterminal startup_script[9563]: <b>1) Install curl...</b>
Dec 27 21:23:41 sreterminal startup_script[9563]: Completed successfully.
Dec 27 21:23:41 sreterminal startup_script[9563]: <b>2) Install git...</b>
Dec 27 21:23:47 sreterminal startup_script[9563]: Completed successfully.
Dec 27 21:23:47 sreterminal startup_script[9563]: <b>3) Install kubectl...</b>
Dec 27 21:23:49 sreterminal startup_script[9563]: Completed successfully.
Dec 27 21:23:49 sreterminal startup_script[9563]: <b>4) Install gke-gcloud-auth-plugin...</b>
Dec 27 21:23:52 sreterminal startup_script[9563]: Completed successfully.
<span style="background:#3a8ae8">Dec 27 21:23:52 sreterminal startup_script[9563]: <b>5) GPG is required for the package signing key.</b></span>
<span style="background:#3a8ae8">Dec 27 21:23:52 sreterminal startup_script[9563]: Completed successfully.                       </span>
<span style="background:#3a8ae8">Dec 27 21:23:52 sreterminal startup_script[9563]: <b>6) Download the signing key to a new keyring</b>   </span>
<span style="background:#3a8ae8">Dec 27 21:23:52 sreterminal startup_script[9563]: Completed successfully.                       </span>
<span style="background:#3a8ae8">Dec 27 21:23:52 sreterminal startup_script[9563]: <b>7) Verify the key's fingerprint...</b>            </span>
Dec 27 21:24:02 sreterminal startup_script[9563]: Completed successfully.
Dec 27 21:24:02 sreterminal startup_script[9563]: <b>8) Add the HashiCorp repo...</b>
Dec 27 21:24:02 sreterminal startup_script[9563]: Completed successfully.
Dec 27 21:24:02 sreterminal startup_script[9563]: <b>9) apt update...</b>
Dec 27 21:24:02 sreterminal startup_script[9563]: Completed successfully.
Dec 27 21:24:02 sreterminal startup_script[9563]: <b>10) Install terraform...</b>
Dec 27 21:24:02 sreterminal startup_script[9563]: Completed successfully.
Dec 27 21:24:02 sreterminal startup_script[9563]: <b>11) Install docker...</b>
Dec 27 21:24:02 sreterminal startup_script[9563]: Completed successfully.
Dec 27 21:24:02 sreterminal startup_script[9563]: <b>12) Install packer...</b>
Dec 27 21:24:02 sreterminal startup_script[9563]: Completed successfully.
Dec 27 21:24:02 sreterminal startup_script[9563]: ***********************
Dec 27 21:24:02 sreterminal startup_script[9563]: <b>CLONE EVERYTHINGCLOUDPLATFORM's PUBLIC REPOS</b>
Dec 27 21:24:02 sreterminal startup_script[9563]: ***********************
Dec 27 21:24:02 sreterminal startup_script[9563]: <b>13) Navigate to /home and create repos folder.</b>
Dec 27 21:24:02 sreterminal startup_script[9563]: <b>14) Cloning utilities repo...</b>
Dec 27 21:24:02 sreterminal startup_script[9563]: Completed successfully.
Dec 27 21:24:02 sreterminal startup_script[9563]: <b>15) Cloning Terraform Modules...</b>
Dec 27 21:24:02 sreterminal startup_script[9563]: Completed successfully.
Dec 27 21:24:02 sreterminal startup_script[9563]: <b>16) Clone GCE Bootcamp Udemy Course Demo code...</b>
Dec 27 21:24:03 sreterminal startup_script[9575]: Completed successfully.
<span style="background:#ddd;color:#000">lines 1-40</span>

alias myip='curl http://ipecho.net/plain; echo '
alias path='echo -e ${PATH//:/\\n}'
alias ports='netstat -a | grep -i "listen"'
alias rename='function _rename() { for i in *$1*; do mv "$i" "${i/$1/$2}"; done }; _rename'
alias repos='cd /home/repos'
alias rm='rm -i'
alias ssh-keygen='function _ssh-keygen(){ ssh-keygen -t $1 -b $2 -C $3; }; _ssh-keygen'
alias ta='terraform apply --auto-approve'
alias td='terraform destroy --auto-approve'
alias ti='terraform init'
alias today='date +"%A, %B %d, %Y"'
alias tp='terraform plan --var-file $1'
alias tsh='terraform show'
alias tsl='terraform state list'
alias tsr='terraform state rm $1'
alias weather='function _weather() { curl wttr.in/$1; }; _weather'
alias wrap_args='f(){ echo before "$@" after;  unset -f f; }; f'
[jai@sreterminal]~$alias | grep gcloud
alias gcca='<span style="background:#1a3a8a">gcloud</span> config configurations activate $1'
alias gccl='<span style="background:#1a3a8a">gcloud</span> config configurations list'
alias gccll='<span style="background:#1a3a8a">gcloud</span> container clusters list'
alias gcfmd='<span style="background:#1a3a8a">gcloud</span> container fleet mesh describe'
alias gcfmml='<span style="background:#1a3a8a">gcloud</span> container fleet memberships list'
alias gcfrl='<span style="background:#1a3a8a">gcloud</span> compute firewall-rules list'
alias gcid='<span style="background:#1a3a8a">gcloud</span> compute instances describe $1'
alias gcil='<span style="background:#1a3a8a">gcloud</span> compute instances list'
alias gcl='<span style="background:#1a3a8a">gcloud</span> config list'
alias gcnl='<span style="background:#1a3a8a">gcloud</span> compute networks list'
alias gcnsl='<span style="background:#1a3a8a">gcloud</span> compute networks subnets list --network $1'
alias gmigd='<span style="background:#1a3a8a">gcloud</span> beta compute instance-groups managed describe $1'
alias gmigl='<span style="background:#1a3a8a">gcloud</span> beta compute instance-groups managed list'
alias gmigli='<span style="background:#1a3a8a">gcloud</span> beta compute instance-groups managed list-instances $1'
alias gmignp='<span style="background:#1a3a8a">gcloud</span> beta compute instance-groups managed get-named-ports $1'
alias gmigrs='<span style="background:#1a3a8a">gcloud</span> beta compute instance-groups managed resize $1 --size $2'
alias gpfoo='f(){ <span style="background:#1a3a8a">gcloud</span> projects get-iam-policy $1 --flatten="bindings[].members" --f
ilter="bindings.members:$2";  unset -f f; }; f'
alias gpl='<span style="background:#1a3a8a">gcloud</span> projects list'
alias gsl='<span style="background:#1a3a8a">gcloud</span> services list'
alias gsla='<span style="background:#1a3a8a">gcloud</span> services list --available'
alias gssh='<span style="background:#1a3a8a">gcloud</span> compute ssh --zone $zone $1  --project $project_id'
[jai@sreterminal]~$
alias kccc='kubectl config current-<span style="background:#1a3a8a">context</span>'
alias kcdc='kubectl config delete-<span style="background:#1a3a8a">context</span>'
alias kcgc='kubectl config get-<span style="background:#1a3a8a">contexts</span>'
alias kcsc='kubectl config set-<span style="background:#1a3a8a">context</span> --current --namespace'
alias kcuc='kubectl config use-<span style="background:#1a3a8a">context</span>'
[jai@sreterminal]~$kccc
gke_codegarage-001-400013_us-east1_gke
[jai@sreterminal]~$kubectl get ns
NAME              STATUS   AGE
default           Active   4h26m
gke-gmp-system    Active   4h26m
gke-managed-cim   Active   4h26m
gke-managed-filestorecsi  Active  4h26m
gmp-public        Active   4h26m
istio-system      Active   3h58m
kube-node-lease   Active   4h26m
kube-public       Active   4h26m
kube-system       Active   4h26m
[jai@sreterminal]~$alias | grep ns
alias gcsd='gcloud container clusters list $1 --<span style="background:#1a3a8a">ns</span>'
alias kcsn='kubectl config set-context --current --<span style="background:#1a3a8a">namespace</span>'
alias kdns='kubectl describe <span style="background:#1a3a8a">ns</span> $1'
alias kgns='kubectl get <span style="background:#1a3a8a">ns</span>'
alias kgp='kubectl get pods --all-<span style="background:#1a3a8a">namespaces</span>'
alias kgpw='kubectl get pods -o wide --all-<span style="background:#1a3a8a">namespaces</span>'
alias kgs='kubectl get svc --all-<span style="background:#1a3a8a">namespaces</span>'
alias kgsw='kubectl get svc -o wide --all-<span style="background:#1a3a8a">namespaces</span>'
alias kgd='kubectl get deploy --all-<span style="background:#1a3a8a">namespaces</span>'
alias kgi='kubectl get ingress --all-<span style="background:#1a3a8a">namespaces</span>'
alias path='echo -e ${PATH//:/\\n}'
alias rename='function _rename() { for i in *$1*; do mv "$i" "${i/$1/$2}"; done }; _rename'
[jai@sreterminal]~$kgns</pre>

</body></html>
